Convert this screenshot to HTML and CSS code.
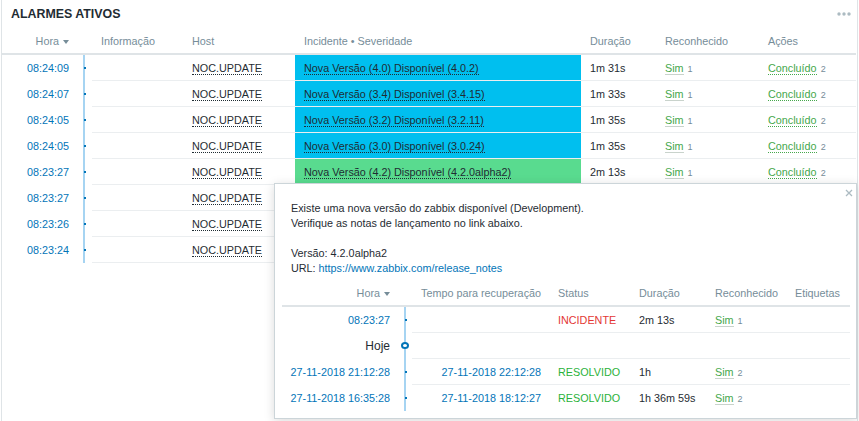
FILE: index.html
```html
<!DOCTYPE html>
<html lang="pt">
<head>
<meta charset="utf-8">
<title>Alarmes ativos</title>
<link rel="stylesheet" href="styles.css">
</head>
<body>
<div class="widget">
  <div class="widget-head">
    <h4 class="widget-title">ALARMES ATIVOS</h4>
    <svg class="widget-menu" width="14" height="4" viewBox="0 0 14 4"><circle cx="2" cy="2" r="1.7"/><circle cx="7" cy="2" r="1.7"/><circle cx="12" cy="2" r="1.7"/></svg>
  </div>
  <table class="grid alarms">
    <colgroup>
      <col style="width:75px"><col style="width:15px"><col style="width:91px"><col style="width:112px"><col style="width:286px"><col style="width:75px"><col style="width:103px"><col style="width:97px">
    </colgroup>
    <thead>
      <tr>
        <th class="right">Hora <svg class="sort" width="6" height="4" viewBox="0 0 6 4"><polygon points="0,0 6,0 3,4"/></svg></th>
        <th class="tl-h"></th>
        <th>Informação</th>
        <th>Host</th>
        <th>Incidente • Severidade</th>
        <th>Duração</th>
        <th>Reconhecido</th>
        <th>Ações</th>
      </tr>
    </thead>
    <tbody>
      <tr>
        <td class="time"><a class="link">08:24:09</a></td><td class="tl"><i class="dot"></i></td><td></td>
        <td><span class="host">NOC.UPDATE</span></td>
        <td class="sev-info"><a class="prob">Nova Versão (4.0) Disponível (4.0.2)</a></td>
        <td>1m 31s</td>
        <td><a class="ack">Sim</a><span class="cnt">1</span></td>
        <td><a class="act">Concluído</a><span class="cnt">2</span></td>
      </tr>
      <tr>
        <td class="time"><a class="link">08:24:07</a></td><td class="tl"><i class="dot"></i></td><td></td>
        <td><span class="host">NOC.UPDATE</span></td>
        <td class="sev-info"><a class="prob">Nova Versão (3.4) Disponível (3.4.15)</a></td>
        <td>1m 33s</td>
        <td><a class="ack">Sim</a><span class="cnt">1</span></td>
        <td><a class="act">Concluído</a><span class="cnt">2</span></td>
      </tr>
      <tr>
        <td class="time"><a class="link">08:24:05</a></td><td class="tl"><i class="dot"></i></td><td></td>
        <td><span class="host">NOC.UPDATE</span></td>
        <td class="sev-info"><a class="prob">Nova Versão (3.2) Disponível (3.2.11)</a></td>
        <td>1m 35s</td>
        <td><a class="ack">Sim</a><span class="cnt">1</span></td>
        <td><a class="act">Concluído</a><span class="cnt">2</span></td>
      </tr>
      <tr>
        <td class="time"><a class="link">08:24:05</a></td><td class="tl"><i class="dot"></i></td><td></td>
        <td><span class="host">NOC.UPDATE</span></td>
        <td class="sev-info"><a class="prob">Nova Versão (3.0) Disponível (3.0.24)</a></td>
        <td>1m 35s</td>
        <td><a class="ack">Sim</a><span class="cnt">1</span></td>
        <td><a class="act">Concluído</a><span class="cnt">2</span></td>
      </tr>
      <tr>
        <td class="time"><a class="link">08:23:27</a></td><td class="tl"><i class="dot"></i></td><td></td>
        <td><span class="host">NOC.UPDATE</span></td>
        <td class="sev-ok"><a class="prob">Nova Versão (4.2) Disponível (4.2.0alpha2)</a></td>
        <td>2m 13s</td>
        <td><a class="ack">Sim</a><span class="cnt">1</span></td>
        <td><a class="act">Concluído</a><span class="cnt">2</span></td>
      </tr>
      <tr>
        <td class="time"><a class="link">08:23:27</a></td><td class="tl"><i class="dot"></i></td><td></td>
        <td><span class="host">NOC.UPDATE</span></td>
        <td class="sev-info"></td>
        <td></td><td></td><td></td>
      </tr>
      <tr>
        <td class="time"><a class="link">08:23:26</a></td><td class="tl"><i class="dot"></i></td><td></td>
        <td><span class="host">NOC.UPDATE</span></td>
        <td class="sev-info"></td>
        <td></td><td></td><td></td>
      </tr>
      <tr>
        <td class="time"><a class="link">08:23:24</a></td><td class="tl"><i class="dot"></i></td><td></td>
        <td><span class="host">NOC.UPDATE</span></td>
        <td class="sev-info"></td>
        <td></td><td></td><td></td>
      </tr>
    </tbody>
  </table>

  <div class="hintbox">
    <svg class="close" width="8" height="8" viewBox="0 0 8 8"><path d="M1 1L7 7M7 1L1 7"/></svg>
    <div class="hint-text">
      <div class="hint-line">Existe uma nova versão do zabbix disponível (Development).</div>
      <div class="hint-line">Verifique as notas de lançamento no link abaixo.</div>
      <div class="hint-gap"></div>
      <div class="hint-line">Versão: 4.2.0alpha2</div>
      <div class="hint-line">URL: <a class="link">https://www.zabbix.com/release_notes</a></div>
    </div>
    <table class="grid events">
      <colgroup>
        <col style="width:116px"><col style="width:14px"><col style="width:137px"><col style="width:81px"><col style="width:76px"><col style="width:80px"><col style="width:64px">
      </colgroup>
      <thead>
        <tr>
          <th class="right">Hora <svg class="sort" width="6" height="4" viewBox="0 0 6 4"><polygon points="0,0 6,0 3,4"/></svg></th>
          <th class="tl-h"></th>
          <th class="right">Tempo para recuperação</th>
          <th>Status</th>
          <th>Duração</th>
          <th>Reconhecido</th>
          <th>Etiquetas</th>
        </tr>
      </thead>
      <tbody>
        <tr>
          <td class="time"><a class="link">08:23:27</a></td><td class="tl"><i class="dot"></i></td>
          <td class="right"></td>
          <td class="red">INCIDENTE</td>
          <td>2m 13s</td>
          <td><a class="ack">Sim</a><span class="cnt">1</span></td>
          <td></td>
        </tr>
        <tr>
          <td class="time today">Hoje</td><td class="tl"><i class="ring"></i></td>
          <td></td><td></td><td></td><td></td><td></td>
        </tr>
        <tr>
          <td class="time"><a class="link">27-11-2018 21:12:28</a></td><td class="tl"><i class="dot"></i></td>
          <td class="right"><a class="link">27-11-2018 22:12:28</a></td>
          <td class="green">RESOLVIDO</td>
          <td>1h</td>
          <td><a class="ack">Sim</a><span class="cnt">2</span></td>
          <td></td>
        </tr>
        <tr class="last">
          <td class="time"><a class="link">27-11-2018 16:35:28</a></td><td class="tl"><i class="dot"></i></td>
          <td class="right"><a class="link">27-11-2018 18:12:27</a></td>
          <td class="green">RESOLVIDO</td>
          <td>1h 36m 59s</td>
          <td><a class="ack">Sim</a><span class="cnt">2</span></td>
          <td></td>
        </tr>
      </tbody>
    </table>
  </div>
</div>
</body>
</html>
```
FILE: styles.css
```css
* { box-sizing: border-box; }
html, body { margin: 0; padding: 0; background: #ffffff; }
body {
  font-family: "Liberation Sans", Arial, sans-serif;
  font-size: 10.8px;
  color: #1f2c33;
  overflow: hidden;
}

.widget {
  position: relative;
  margin: 0 1px;
  height: 421px;
  border-left: 1px solid #dfe4e7;
  border-right: 1px solid #dfe4e7;
}

.widget-head {
  display: flex;
  align-items: center;
  justify-content: space-between;
  height: 28px;
  padding: 0 6px 0 9px;
}
.widget-title {
  margin: 0;
  font-size: 12.4px;
  font-weight: bold;
  color: #1f2c33;
}
.widget-menu { fill: #acbbc2; margin-top: -1px; }

.grid {
  border-collapse: separate;
  border-spacing: 0;
  table-layout: fixed;
}
.alarms { width: 854px; }
.grid th {
  height: 27px;
  padding: 0 9px;
  font-weight: normal;
  color: #768d99;
  text-align: left;
  white-space: nowrap;
  border-bottom: 2px solid #dfe4e7;
}
.grid td {
  height: 26px;
  padding: 0 9px;
  white-space: nowrap;
  overflow: hidden;
  border-bottom: 1px solid #ebeef0;
}
.grid th.right, .grid td.right { text-align: right; padding-right: 8px; }
.grid th.tl-h { padding: 0; }
.sort { fill: #768d99; margin-left: 1px; vertical-align: 1px; }

.grid td.time {
  text-align: right;
  padding: 0 8px 0 0;
  border-bottom: none;
}
.grid td.tl {
  position: relative;
  padding: 0;
  border-bottom: none;
  background: linear-gradient(to right, transparent 6px, #a6d4f2 6px, #a6d4f2 8px, transparent 8px);
}
.dot {
  position: absolute;
  left: 7px;
  top: 12px;
  width: 2px;
  height: 2px;
  background: #0275b8;
}
.ring {
  position: absolute;
  left: 3px;
  top: 9px;
  width: 8px;
  height: 7px;
  border: 2px solid #0275b8;
  border-radius: 50%;
  background: #ffffff;
}

.link { color: #0275b8; text-decoration: none; }
.host { border-bottom: 1px dotted #1f2c33; }
.prob { color: #1f2c33; border-bottom: 1px dotted #1f2c33; }
.sev-info { background: #00bfef; }
.sev-ok { background: #59db8f; }

.ack { color: #45a84c; border-bottom: 1px solid #c9d3cc; }
.act { color: #45a84c; border-bottom: 1px dotted #45a84c; }
.cnt { color: #768d99; font-size: 9px; margin-left: 4px; }

.red { color: #e33734; }
.green { color: #2ab23a; }

.hintbox {
  position: absolute;
  left: 272px;
  top: 183px;
  width: 583px;
  height: 236px;
  padding: 10px 5px 0 7px;
  background: #ffffff;
  border: 1px solid #ccd5d9;
  box-shadow: 0 2px 10px rgba(0, 0, 0, 0.15);
}
.close {
  position: absolute;
  top: 5px;
  right: 3px;
  stroke: #acbbc2;
  stroke-width: 1.3;
  fill: none;
}
.hint-text {
  display: flex;
  flex-direction: column;
  margin: 7px 0 4px 9px;
}
.hint-line { height: 15px; line-height: 15px; white-space: nowrap; }
.hint-gap { height: 15px; }
.events { width: 568px; }
.events tr.last td { border-bottom: none; }
.grid td.today { font-size: 12px; color: #1f2c33; }
```
